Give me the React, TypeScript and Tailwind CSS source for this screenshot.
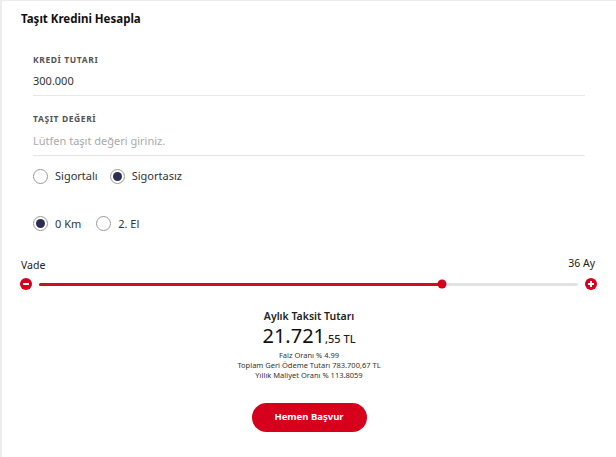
import React from "react";

function Radio({ checked, label }: { checked: boolean; label: string }) {
  return (
    <label className="flex items-center gap-[7px]">
      <span className="flex h-[15px] w-[15px] items-center justify-center rounded-full border border-[#9a9a9a] bg-white">
        {checked && <span className="h-[9px] w-[9px] rounded-full bg-[#2b2d52]" />}
      </span>
      <span className="text-[11px] text-[#333]">{label}</span>
    </label>
  );
}

export default function App() {
  const pct = (441 - 39) / (577 - 39);
  return (
    <div
      className="h-[457px] w-[616px] overflow-hidden border-t border-l-2 border-[#ececec] bg-white"
      style={{ fontFamily: '"Noto Sans", "Liberation Sans", sans-serif' }}
    >
      <div className="px-[19px] pt-[9px]">
        <h1 className="text-[11.5px] font-bold leading-[18px] text-[#111]">Taşıt Kredini Hesapla</h1>

        <div className="ml-[12px] mr-[12px] mt-[26px]">
          <div className="text-[8.5px] font-bold uppercase tracking-[0.6px] text-[#555] leading-[12px]">KREDİ TUTARI</div>
          <div className="mt-[8px] pb-[7px] text-[11px] leading-[14px] text-[#333] border-b border-[#e6e6e6]">300.000</div>

          <div className="mt-[17px] text-[8.5px] font-bold uppercase tracking-[0.6px] text-[#555] leading-[12px]">TAŞIT DEĞERİ</div>
          <div className="mt-[9px] pb-[7px] text-[11px] leading-[14px] text-[#aaa] border-b border-[#e6e6e6]">Lütfen taşıt değeri giriniz.</div>

          <div className="mt-[12px] flex items-center gap-[12px]">
            <Radio checked={false} label="Sigortalı" />
            <Radio checked={true} label="Sigortasız" />
          </div>

          <div className="mt-[31px] flex items-center gap-[15px]">
            <Radio checked={true} label="0 Km" />
            <Radio checked={false} label="2. El" />
          </div>
        </div>

        <div className="mt-[24px] flex items-end justify-between pr-[2px]">
          <span className="text-[10.5px] leading-[14px] text-[#222]">Vade</span>
          <span className="mb-[2px] text-[10.5px] leading-[14px] text-[#222]">36 Ay</span>
        </div>

        <div className="mt-[6px] flex items-center -ml-[1px]">
          <span className="flex h-[12px] w-[12px] items-center justify-center rounded-full bg-[#d6001c]">
            <span className="h-[1.5px] w-[6px] bg-white" />
          </span>
          <div className="relative mx-[7px] h-[3px] flex-1 rounded bg-[#e2e2e2]">
            <div className="absolute left-0 top-0 h-[3px] rounded bg-[#c8101e]" style={{ width: `${pct * 100}%` }} />
            <div
              className="absolute top-1/2 h-[9px] w-[9px] -translate-x-1/2 -translate-y-1/2 rounded-full bg-[#d6001c]"
              style={{ left: `${pct * 100}%` }}
            />
          </div>
          <span className="relative flex h-[12px] w-[12px] items-center justify-center rounded-full bg-[#d6001c]">
            <span className="absolute h-[1.5px] w-[6px] bg-white" />
            <span className="absolute h-[6px] w-[1.5px] bg-white" />
          </span>
        </div>

        <div className="mt-[19px] flex flex-col items-center text-[#222]">
          <div className="text-[10.5px] font-semibold leading-[14px]">Aylık Taksit Tutarı</div>
          <div className="mt-[2px] flex items-baseline leading-[22px]">
            <span className="text-[20px] font-normal text-[#111]">21.721</span>
            <span className="text-[11px] font-medium">,55 TL</span>
          </div>
          <div className="text-[7.5px] leading-[10px] text-[#333]">Faiz Oranı % 4.99</div>
          <div className="text-[7.5px] leading-[10px] text-[#333]">Toplam Geri Ödeme Tutarı 783.700,67 TL</div>
          <div className="text-[7.5px] leading-[10px] text-[#333]">Yıllık Maliyet Oranı % 113.8059</div>

          <button className="mt-[23px] h-[29px] w-[115px] rounded-full bg-[#d6001c] text-[9.5px] font-bold text-white">
            Hemen Başvur
          </button>
        </div>
      </div>
    </div>
  );
}
